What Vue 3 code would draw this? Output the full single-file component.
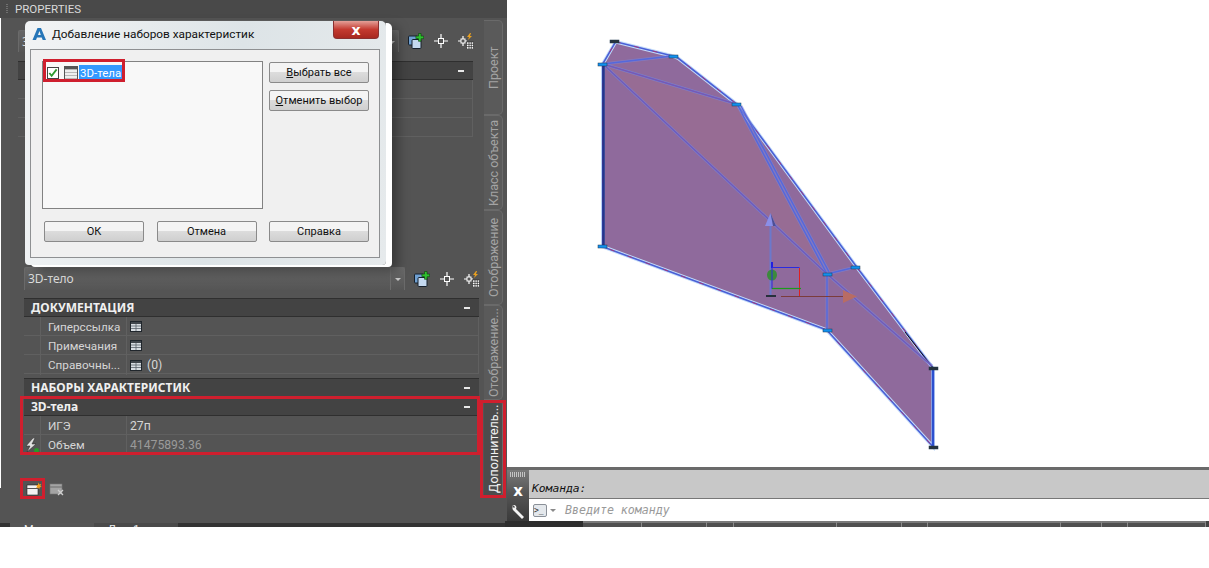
<script setup>
const docRows = [
  { label: 'Гиперссылка', table: true, value: '' },
  { label: 'Примечания', table: true, value: '' },
  { label: 'Справочны...', table: true, value: '(0)' }
]
const solidRows = [
  { label: 'ИГЭ', value: '27п' },
  { label: 'Объем', value: '41475893.36', dim: true, bolt: true }
]
const tabs = [
  { label: 'Проект' },
  { label: 'Класс объекта' },
  { label: 'Отображение' },
  { label: 'Отображение...' },
  { label: 'Дополнитель...', active: true }
]
const statusParts = [78, 59, 65, 27, 103, 65, 26, 133, 41, 26, 78]

const outline = '615.7,41.7 672.7,56 678,58 736.7,104 856.7,267 933,368 933,446.7 826.7,330 602.7,246.7 602.7,64'
const meshLines = [
  [603, 64, 672, 56],
  [603, 64, 736, 104],
  [603, 64, 827, 274],
  [827, 274, 932, 366],
  [737, 104, 827, 274],
  [741, 106, 829, 272],
  [827, 274, 856, 267],
  [827, 274, 827, 330]
]
const grips = [
  [610, 40, true], [669, 55, false], [598, 63, false], [732, 103, false],
  [598, 245, false], [851, 266, false], [823, 273, false], [823, 329, false],
  [929, 367, true], [929, 446, true]
]
</script>

<template>
  <div class="page">
    <svg class="defs" width="0" height="0">
      <symbol id="ic-add" viewBox="0 0 16 16">
        <rect x=".5" y="3" width="9" height="9" rx="1" fill="#6f9fd0" stroke="#16202c" />
        <rect x="4" y="6.5" width="9" height="9" rx="1" fill="#c4d9f0" stroke="#16202c" />
        <path d="M10.5 .5h2.6v2.6h2.6v2.6h-2.6v2.6h-2.6V5.7H7.9V3.1h2.6z" fill="#2fbf2f" stroke="#0c3c0c" stroke-width=".6" />
      </symbol>
      <symbol id="ic-pick" viewBox="0 0 16 16">
        <path d="M8 1v4M8 11v4M1 8h4M11 8h4" stroke="#fff" stroke-width="1.2" />
        <rect x="5.5" y="5.5" width="5" height="5" fill="none" stroke="#fff" />
      </symbol>
      <symbol id="ic-quick" viewBox="0 0 16 16">
        <path d="M5 3v3M5 10v3M0 8h3M7 8h2" stroke="#fff" stroke-width="1.2" />
        <rect x="3" y="6" width="4" height="4" fill="none" stroke="#fff" />
        <path d="M12 0l-3 4h2l-1 3 4-4h-2l1-3z" fill="#e8a020" />
        <rect x="8.5" y="9" width="7" height="7" fill="#fff" stroke="#222" stroke-width=".6" />
        <path d="M8.5 11.3h7M8.5 13.6h7M11 9v7M13.3 9v7" stroke="#222" stroke-width=".7" />
      </symbol>
      <symbol id="ic-table" viewBox="0 0 12 11">
        <rect x=".5" y=".5" width="11" height="10" fill="#d8dde2" stroke="#20262c" />
        <rect x="1" y="1" width="10" height="2" fill="#40464c" />
        <path d="M1 5h10M1 7.5h10M6 3v7" stroke="#59626b" stroke-width=".8" />
      </symbol>
    </svg>

    <aside class="left">
      <header class="title">
        <span class="grip"></span>
        <span>PROPERTIES</span>
      </header>

      <div class="palette">
        <div class="edge"></div>
        <div class="content">
          <div class="upper">
            <div class="selector">
              <div class="combo">3D-тело<span class="combo-arrow"></span></div>
              <svg class="tool"><use href="#ic-add" /></svg>
              <svg class="tool"><use href="#ic-pick" /></svg>
              <svg class="tool"><use href="#ic-quick" /></svg>
            </div>
            <div class="head ghost-head"><span>ОБЩИЕ</span><i class="collapse"></i></div>
            <div class="row" v-for="n in 3" :key="n"><span class="gutter"></span><span class="label"></span><span class="value"></span></div>
          </div>

          <div class="lower">
            <div class="selector">
              <div class="combo">3D-тело<span class="combo-arrow"></span></div>
              <svg class="tool"><use href="#ic-add" /></svg>
              <svg class="tool"><use href="#ic-pick" /></svg>
              <svg class="tool"><use href="#ic-quick" /></svg>
            </div>

            <div class="head"><span>ДОКУМЕНТАЦИЯ</span><i class="collapse"></i></div>
            <div class="row" v-for="r in docRows" :key="r.label">
              <span class="gutter"></span>
              <span class="label">{{ r.label }}</span>
              <span class="value">
                <svg class="tbl"><use href="#ic-table" /></svg>
                <span v-if="r.value">{{ r.value }}</span>
              </span>
            </div>

            <div class="head spaced"><span>НАБОРЫ ХАРАКТЕРИСТИК</span><i class="collapse"></i></div>
            <div class="head"><span>3D-тела</span><i class="collapse"></i></div>
            <div class="row" v-for="r in solidRows" :key="r.label">
              <span class="gutter">
                <svg v-if="r.bolt" width="14" height="15" viewBox="0 0 14 15">
                  <path d="M8 0L1 8h4l-3 6 9-8H7l3-6z" fill="#e0e0e0" stroke="#222" stroke-width=".5" />
                  <circle cx="11.5" cy="12.5" r="2.5" fill="#2a9a2a" />
                </svg>
              </span>
              <span class="label">{{ r.label }}</span>
              <span class="value" :class="{ dim: r.dim }">{{ r.value }}</span>
            </div>

            <div class="set-tools">
              <svg width="16" height="14" viewBox="0 0 16 14">
                <rect x="1" y="3" width="11" height="10" fill="#f2f2f2" stroke="#222" stroke-width=".6" />
                <path d="M1 6.5h11" stroke="#555" stroke-width="1" />
                <path d="M12.5 .5l.8 2 2-.6-1 1.8 1.4 1.4-2 .2-.4 2-1.2-1.6-2 .4 1-1.7-1.2-1.5 2 .2z" fill="#f0a020" />
              </svg>
              <svg width="16" height="14" viewBox="0 0 16 14">
                <rect x="1" y="2" width="12" height="10" fill="#a4a4a4" stroke="#777" stroke-width=".6" />
                <path d="M1 5h12" stroke="#777" stroke-width="1.2" />
                <path d="M9 8l5 5M14 8l-5 5" stroke="#cfcfcf" stroke-width="1.3" />
              </svg>
            </div>
          </div>
        </div>

        <nav class="tabs">
          <div v-for="t in tabs" :key="t.label" class="tab" :class="{ active: t.active }">
            <span>{{ t.label }}</span>
          </div>
        </nav>
      </div>

      <div class="sheets">
        <span class="sheet on">Модель</span>
        <span class="sheet">Лист1</span>
      </div>
    </aside>

    <main class="work">
      <div class="view">
        <svg class="model" viewBox="507 0 702 467" width="702" height="467">
          <polygon :points="outline" fill="#8f6a9c" stroke="#c4dcfa" stroke-width="3.5" />
          <polygon points="603,64 736,104 827,274" fill="#976c94" />
          <polygon :points="outline" fill="none" stroke="#4a5fd6" stroke-width="1.6" />
          <polygon :points="outline" fill="none" stroke="#e0203c" stroke-width=".6" stroke-dasharray="5 14" />
          <path d="M905 332l28 36" stroke="#111" stroke-width="1" />
          <line v-for="(l, i) in meshLines" :key="'h' + i" :x1="l[0]" :y1="l[1]" :x2="l[2]" :y2="l[3]" stroke="#7f86d8" stroke-width="3" stroke-opacity=".55" />
          <line v-for="(l, i) in meshLines" :key="i" :x1="l[0]" :y1="l[1]" :x2="l[2]" :y2="l[3]" stroke="#5468dc" stroke-width="1.4" />
          <line v-for="(l, i) in meshLines.slice(1, 4)" :key="'r' + i" :x1="l[0]" :y1="l[1]" :x2="l[2]" :y2="l[3]" stroke="#a04a88" stroke-width=".6" />
          <path d="M603.5 64v182" stroke="#24358c" stroke-width="2.6" />
          <path d="M933 368v78" stroke="#2c50d0" stroke-width="2.6" />
          <path d="M770.5 226v70" stroke="#6b79cc" stroke-width="2" />
          <polygon points="770.5,213 765,226 776,226" fill="#8a8fe8" />
          <polygon points="770.5,213 773,226 776,226" fill="#4d4f96" />
          <ellipse cx="772" cy="275" rx="5" ry="5.5" fill="#3c8a3c" />
          <path d="M772 262v6" stroke="#2020e0" stroke-width="2" />
          <path d="M772 267.5h27.5M772 268v21" fill="none" stroke="#2a2ae0" stroke-width="1" />
          <path d="M799.5 268v28" stroke="#e02020" />
          <path d="M772 288.5h29" stroke="#1c9a1c" stroke-width="1.2" />
          <path d="M781 296.5h64" stroke="#7c3c3c" stroke-width="1" />
          <polygon points="857,296.5 843,290 843,303" fill="#b86c64" />
          <rect x="766" y="295" width="10" height="2" fill="#26303c" />
          <rect v-for="(g, i) in grips" :key="'g' + i" :x="g[0]" :y="g[1]" width="9" height="3" :fill="g[2] ? '#26323c' : '#1090f0'" stroke="#20384c" stroke-width=".5" />
        </svg>
      </div>

      <div class="cmd">
        <div class="cmd-side">
          <span class="cmd-dots"></span>
          <span class="cmd-x">x</span>
          <svg width="16" height="16" viewBox="0 0 16 16">
            <path d="M4 1a4 4 0 0 0-1 5l0 0 1 1 8 8 2-2-8-8c1-2 0-4-2-4l-1 0 2 2-1 1-2-2z" fill="#f4f4f4" />
          </svg>
        </div>
        <div class="cmd-main">
          <div class="history">Команда:</div>
          <div class="input">
            <span class="prompt">&gt;_</span>
            <span class="prompt-arrow"></span>
            <span>Введите команду</span>
          </div>
        </div>
      </div>

      <div class="status">
        <span v-for="(w, i) in statusParts" :key="i" class="status-part" :style="{ width: w + 'px' }"></span>
      </div>
    </main>

    <section class="dialog">
      <div class="dlg-title">
        <svg width="16" height="16" viewBox="0 0 16 16">
          <path d="M6.5 2h3.5L15 14h-3.3l-1-2.6H6L5 14H1.5zM7 9h2.8L8.4 5z" fill="#2676b8" />
        </svg>
        <span>Добавление наборов характеристик</span>
        <button class="dlg-close">x</button>
      </div>
      <div class="dlg-body">
        <div class="dlg-top">
          <div class="list">
            <div class="list-item">
              <span class="check">
                <svg width="11" height="10" viewBox="0 0 11 10"><path d="M1.5 5l2.5 3 5.5-7" fill="none" stroke="#2f9a2f" stroke-width="2" /></svg>
              </span>
              <span class="sheet-ic"></span>
              <span class="list-label">3D-тела</span>
            </div>
          </div>
          <div class="side-btns">
            <button class="btn"><u>В</u>ыбрать все</button>
            <button class="btn"><u>О</u>тменить выбор</button>
          </div>
        </div>
        <div class="dlg-bottom">
          <button class="btn">ОК</button>
          <button class="btn">Отмена</button>
          <button class="btn">Справка</button>
        </div>
      </div>
    </section>

    <div class="mark mark-item"></div>
    <div class="mark mark-props"></div>
    <div class="mark mark-tab"></div>
    <div class="mark mark-add"></div>
  </div>
</template>

<style scoped>
.page {
  position: relative;
  display: flex;
  align-items: flex-start;
  width: 1209px;
  height: 568px;
  overflow: hidden;
  background: #fff;
  font-family: Roboto, "Noto Sans", sans-serif;
}

.defs {
  position: absolute;
}

.left {
  display: flex;
  flex-direction: column;
  width: 507px;
  height: 527px;
  background: #545454;
  flex: none;
}

.title {
  display: flex;
  align-items: center;
  gap: 7px;
  height: 18px;
  padding-left: 6px;
  background: #494949;
  color: #d9d9d9;
  font-size: 11.5px;
  flex: none;
}

.grip {
  width: 2px;
  height: 10px;
  background: repeating-linear-gradient(#707070 0 1px, transparent 1px 2px);
}

.palette {
  display: flex;
  flex: 1;
  min-height: 0;
}

.edge {
  width: 1px;
  height: 470px;
  background: #fff;
  flex: none;
}

.content {
  flex: 1;
  min-width: 0;
}

.upper {
  width: 455px;
  margin-left: 17px;
  padding-top: 12px;
}

.lower {
  width: 455px;
  margin-left: 23px;
  margin-top: 130px;
}

.selector {
  display: flex;
  align-items: center;
  width: 482px;
  height: 23px;
  margin-bottom: 8px;
}

.upper .selector {
  height: 22px;
  margin-bottom: 9px;
}

.combo {
  position: relative;
  width: 381px;
  height: 100%;
  padding-left: 3px;
  box-sizing: border-box;
  border: 1px solid #6a6a6a;
  border-bottom: 0;
  border-radius: 2px 2px 0 0;
  background: linear-gradient(#666, #555);
  color: #ddd;
  font-family: "Noto Sans", sans-serif;
  font-size: 12px;
  line-height: 22px;
  flex: none;
}

.combo-arrow {
  position: absolute;
  top: 0;
  right: 0;
  bottom: 0;
  width: 13px;
  border-left: 1px solid #6d6d6d;
  background: linear-gradient(#6a6a6a, #555);
}

.combo-arrow::after {
  content: '';
  position: absolute;
  left: 4px;
  top: 10px;
  border: 3px solid transparent;
  border-top-color: #c8c8c8;
}

.tool {
  width: 16px;
  height: 16px;
  margin-left: 9px;
  flex: none;
}

.head {
  display: flex;
  align-items: center;
  justify-content: space-between;
  height: 19px;
  padding: 0 9px 0 7px;
  box-sizing: border-box;
  border: 1px solid #2f2f2f;
  border-width: 1px 0;
  background: #434343;
  color: #f0f0f0;
  font-family: "Noto Sans", sans-serif;
  font-size: 12px;
  font-weight: 700;
}

.ghost-head span {
  visibility: hidden;
}

.spaced {
  margin-top: 4px;
}

.collapse {
  width: 6px;
  height: 2px;
  background: #e8e8e8;
}

.row {
  display: grid;
  grid-template-columns: 17px 86px 1fr;
  height: 19px;
  box-sizing: border-box;
  border-bottom: 1px solid #606060;
  border-right: 1px solid #606060;
  color: #d6d6d6;
  font-size: 12.2px;
  line-height: 20px;
}

.gutter {
  display: flex;
  align-items: center;
  justify-content: center;
  border-right: 1px solid #606060;
}

.label {
  padding-left: 7px;
  border-right: 1px solid #606060;
  font-size: 11.7px;
  white-space: nowrap;
  overflow: hidden;
}

.value {
  display: flex;
  align-items: center;
  gap: 5px;
  padding-left: 3px;
}

.value.dim {
  color: #9a9a9a;
}

.tbl {
  width: 12px;
  height: 11px;
}

.set-tools {
  display: flex;
  align-items: center;
  gap: 7px;
  margin: 28px 0 0 2px;
}

.tabs {
  display: flex;
  flex-direction: column;
  width: 19px;
  margin: 2px 4px 0 0;
  flex: none;
}

.tab {
  display: flex;
  align-items: center;
  justify-content: center;
  height: 95px;
  box-sizing: border-box;
  border: 1px solid #6a6a6a;
  border-right: 0;
  border-radius: 5px 0 0 5px;
  background: #5a5a5a;
  color: #a4a4a4;
  font-size: 12.5px;
  writing-mode: vertical-rl;
  transform: rotate(180deg);
  white-space: nowrap;
  overflow: hidden;
}

.tab.active {
  height: 97px;
  background: #4c4c4c;
  color: #f2f2f2;
}

.sheets {
  display: flex;
  height: 4px;
  padding-left: 10px;
  overflow: hidden;
  background: #333;
  color: #eee;
  font-size: 11px;
  line-height: 14px;
  flex: none;
}

.sheet {
  width: 70px;
  padding-left: 14px;
  background: #4a4a4a;
}

.sheet.on {
  background: #555;
}

.work {
  display: flex;
  flex-direction: column;
  flex: 1;
  min-width: 0;
}

.view {
  height: 467px;
  flex: none;
}

.model {
  display: block;
}

.cmd {
  display: flex;
  height: 51px;
  border-top: 3px solid #6a6a6a;
}

.cmd-side {
  display: flex;
  flex-direction: column;
  align-items: center;
  width: 22px;
  background: linear-gradient(#7a7a7a 0, #555 45%, #3a3a3a);
  flex: none;
}

.cmd-dots {
  width: 16px;
  height: 5px;
  margin-top: 2px;
  background: repeating-linear-gradient(90deg, #c4c4c4 0 1px, transparent 1px 2px);
}

.cmd-x {
  margin: 6px 0 5px;
  color: #fff;
  font-family: "DejaVu Sans", sans-serif;
  font-size: 15px;
  font-weight: 700;
  line-height: 16px;
}

.cmd-main {
  display: flex;
  flex-direction: column;
  flex: 1;
  min-width: 0;
}

.history {
  height: 29px;
  padding-left: 3px;
  box-sizing: border-box;
  border-bottom: 1px solid #777;
  background: #c8c8c8;
  color: #111;
  font-family: "DejaVu Sans Mono", monospace;
  font-size: 11.3px;
  font-style: italic;
  line-height: 38px;
}

.input {
  display: flex;
  align-items: center;
  height: 22px;
  padding-left: 4px;
  box-sizing: border-box;
  background: #fff;
  color: #9a9a9a;
  font-family: "DejaVu Sans Mono", monospace;
  font-size: 11.6px;
  font-style: italic;
}

.prompt {
  width: 12px;
  height: 11px;
  border: 1px solid #8a9098;
  border-radius: 2px;
  background: #e4e8ec;
  color: #333;
  font-size: 8px;
  font-style: normal;
  line-height: 11px;
}

.prompt-arrow {
  margin: 3px 9px 0 3px;
  border: 3px solid transparent;
  border-top-color: #8a8a8a;
}

.status {
  display: flex;
  height: 6px;
  margin-left: -2px;
  background: #444;
  overflow: hidden;
}

.status-part {
  box-sizing: border-box;
  border-top: 2px solid #7a7a7a;
  border-right: 1px solid #8a8a8a;
  background: #505050;
  flex: none;
}

.status-part:first-child {
  border: 0;
  background: #2e2e2e;
}

.dialog {
  position: absolute;
  left: 25px;
  top: 21px;
  width: 361px;
  height: 244px;
  padding: 0 6px 6px 5px;
  box-sizing: border-box;
  border-radius: 5px 5px 4px 4px;
  background: linear-gradient(100deg, #f2f4f5, #dde4e7 55%, #e6eaec);
  box-shadow: 0 -1px 0 #5a5a5a, 6px 2px 0 #fff, 12px 6px 12px rgba(0, 0, 0, 0.35);
}

.dlg-title {
  display: flex;
  align-items: center;
  gap: 5px;
  height: 28px;
  padding: 0 0 2px 1px;
  box-sizing: border-box;
  color: #111;
  font-size: 11.8px;
  position: relative;
}

.dlg-close {
  position: absolute;
  right: 1px;
  top: 0;
  width: 46px;
  height: 18px;
  padding: 0;
  border: 1px solid #8a3030;
  border-top: 0;
  border-radius: 0 0 4px 4px;
  background: linear-gradient(#e4a098, #c43a30 50%, #a82820);
  color: #fff;
  font-family: "DejaVu Sans", sans-serif;
  font-size: 14px;
  font-weight: 700;
  line-height: 14px;
}

.dlg-body {
  height: 209px;
  padding: 11px 10px 0 11px;
  box-sizing: border-box;
  border: 1px solid #8e9092;
  background: #f0f0f0;
}

.dlg-top {
  display: flex;
  gap: 6px;
}

.list {
  width: 221px;
  height: 148px;
  padding: 3px 0 0 4px;
  box-sizing: border-box;
  border: 1px solid #828282;
  background: #f8f8f8;
  flex: none;
}

.list-item {
  display: flex;
  align-items: center;
  height: 16px;
}

.check {
  display: flex;
  align-items: center;
  justify-content: center;
  width: 12px;
  height: 12px;
  margin-right: 5px;
  box-sizing: border-box;
  border: 1px solid #444;
  background: #fff;
}

.sheet-ic {
  width: 14px;
  height: 14px;
  margin-right: 1px;
  box-sizing: border-box;
  border: 1px solid #555;
  background: repeating-linear-gradient(#b8b8b8 0 1px, #eee 1px 3px);
  border-top: 3px solid #555;
}

.list-label {
  width: 43px;
  padding-left: 1px;
  box-sizing: border-box;
  background: #3399ff;
  color: #fff;
  font-size: 11.5px;
  line-height: 16px;
  white-space: nowrap;
}

.side-btns {
  display: flex;
  flex-direction: column;
  gap: 7px;
  padding-top: 1px;
}

.btn {
  width: 100px;
  height: 21px;
  padding: 0;
  border: 1px solid #8a8a8a;
  border-radius: 2px;
  background: linear-gradient(#f4f4f4 45%, #dcdcdc 50%, #cfcfcf);
  color: #111;
  font-family: inherit;
  font-size: 11px;
  line-height: 18px;
  white-space: nowrap;
}

.dlg-bottom {
  display: flex;
  justify-content: space-between;
  width: 325px;
  margin: 12px 0 0 2px;
}

.mark {
  position: absolute;
  box-sizing: border-box;
  border: 3px solid #cf1f2e;
}

.mark-item {
  left: 43px;
  top: 59px;
  width: 82px;
  height: 23px;
}

.mark-props {
  left: 20px;
  top: 396px;
  width: 460px;
  height: 59px;
}

.mark-tab {
  left: 480px;
  top: 400px;
  width: 26px;
  height: 98px;
}

.mark-add {
  left: 20px;
  top: 478px;
  width: 25px;
  height: 21px;
}
</style>
